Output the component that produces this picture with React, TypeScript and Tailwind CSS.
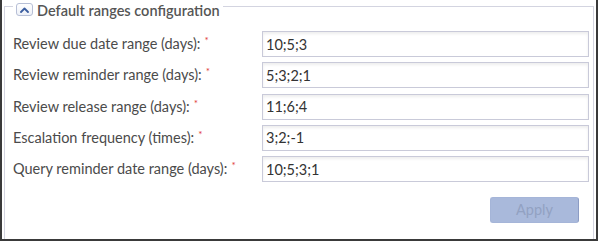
import React from "react";

const rows = [
  { label: "Review due date range (days):", value: "10;5;3" },
  { label: "Review reminder range (days):", value: "5;3;2;1" },
  { label: "Review release range (days):", value: "11;6;4" },
  { label: "Escalation frequency (times):", value: "3;2;-1" },
  { label: "Query reminder date range (days):", value: "10;5;3;1" },
];

export default function App() {
  return (
    <div
      className="w-[598px] h-[241px] overflow-hidden bg-white border-l-2 border-r-2 border-b-2 border-[#3a3a3a] pl-[2px] pr-[2px]"
      style={{ fontFamily: "Lato, 'Liberation Sans', sans-serif" }}
    >
      {/* Panneau des plages par défaut */}
      <fieldset className="border border-b-0 border-[#d3d4e0] pl-[8px] pr-[4px] pb-[20px]">
        <legend className="flex items-start h-[12px] px-[3px]">
          <button className="mt-[3px] w-[17px] h-[13px] flex items-center justify-center rounded-[3px] border border-[#b7bfd6] bg-gradient-to-b from-white to-[#eef1f8]">
            <svg width="9" height="6" viewBox="0 0 9 6" fill="none">
              <path d="M1 5 L4.5 1.5 L8 5" stroke="#3b5e9f" strokeWidth="1.8" strokeLinecap="round" strokeLinejoin="round" />
            </svg>
          </button>
          <span className="ml-[4px] mt-[2px] text-[14.5px] leading-[17px] font-semibold text-[#555555] whitespace-nowrap">
            Default ranges configuration
          </span>
        </legend>

        <div className="pt-[19px] flex flex-col gap-[5.25px]">
          {rows.map((row) => (
            <div key={row.label} className="flex items-center h-[26px]">
              <label className="w-[249px] text-[14.5px] text-[#4b4b4b] whitespace-nowrap">
                {row.label}
                <span className="ml-[4px] text-[10px] text-[#e03a3a] align-top">*</span>
              </label>
              <input
                defaultValue={row.value}
                className="w-[327px] h-[26px] border border-[#c9cad9] bg-white pl-[3px] text-[14.5px] text-[#333333] outline-none shadow-[inset_0_2px_3px_rgba(0,0,0,0.07)]"
              />
            </div>
          ))}
        </div>

        <div className="flex justify-end pr-[10px] mt-[15px]">
          <button
            disabled
            className="w-[89px] h-[26px] rounded-[3px] bg-[#a9b9db] border border-[#a5b5d8] border-r-[#8c9cc4] text-[14.5px] text-[#92a1c2]"
          >
            Apply
          </button>
        </div>
      </fieldset>
    </div>
  );
}
